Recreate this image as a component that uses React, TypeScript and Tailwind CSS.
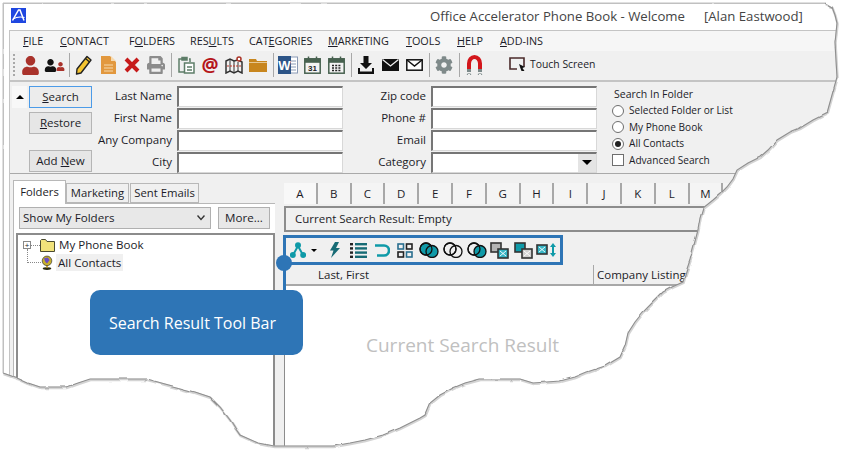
import { FaCog, FaPrint, FaUser } from 'react-icons/fa';

// Torn part of the paper outline, from the top right round to the bottom left
const TORN_EDGE =
  'M825 3 L832 7 L835 15 L837 23 L835 43 L836 60 L837 77 L832 95 L827 113 L813 120 L800 128 L790 132 L777 140 L768 150 L760 157 L748 163 L737 170 L733 179 L727 187 L720 194 L713 200 L703 208 L700 218 L698 230 L694 245 L690 260 L686 272 L683 282 L672 287 L663 292 L652 303 L643 312 L635 322 L628 333 L625 346 L620 357 L605 366 L587 372 L575 377 L560 381 L533 383 L520 379 L480 379 L465 383 L453 388 L440 395 L430 403 L425 415 L420 418 L400 428 L383 435 L365 440 L350 443 L333 446 L273 446 L258 443 L240 435 L235 428 L230 420 L220 407 L210 397 L195 392 L180 388 L165 384 L147 379 L90 379 L78 383 L67 387 L40 387 L28 383 L17 378 L3 373';

const TORN = 'M3 3 L' + TORN_EDGE.slice(1) + ' Z';

const MENU = [
  { key: 'F', rest: 'ILE', w: 'w-[37px]' },
  { key: 'C', rest: 'ONTACT', w: 'w-[69px]' },
  { pre: 'F', key: 'O', rest: 'LDERS', w: 'w-[61px]' },
  { pre: 'RES', key: 'U', rest: 'LTS', w: 'w-[59px]' },
  { pre: 'CAT', key: 'E', rest: 'GORIES', w: 'w-[79px]' },
  { key: 'M', rest: 'ARKETING', w: 'w-[78px]' },
  { key: 'T', rest: 'OOLS', w: 'w-[51px]' },
  { key: 'H', rest: 'ELP', w: 'w-[43px]' },
  { key: 'A', rest: 'DD-INS', w: 'w-[70px]' },
];

const LETTERS = ['A', 'B', 'C', 'D', 'E', 'F', 'G', 'H', 'I', 'J', 'K', 'L', 'M', 'N'];

function Slot({ children }: { children: React.ReactNode }) {
  return <div className="flex h-[24px] w-[24px] items-center justify-center">{children}</div>;
}

function Sep() {
  return (
    <div className="flex h-[24px] w-[6px] justify-center">
      <div className="h-full w-px bg-[#a8a8a8]" />
    </div>
  );
}

function Logo() {
  return (
    <svg width="15" height="15" viewBox="0 0 15 15" className="ml-[7px] mt-[-3px] shrink-0">
      <rect width="15" height="15" fill="#1f47e0" />
      <path d="M1.5 12.5 L7.5 2 L9 2 L13 12.5" fill="none" stroke="#fff" strokeWidth="1.5" />
      <path d="M2 11 C6 8.5 9 8.5 13.5 9.5" fill="none" stroke="#fff" strokeWidth="1.2" />
    </svg>
  );
}

function Pencil() {
  return (
    <svg width="18" height="20" viewBox="0 0 18 20">
      <path d="M12 1.5 L16 5 L6 18 L1.5 19 L2 14 Z" fill="#f4c430" stroke="#222" strokeWidth="1.4" strokeLinejoin="round" />
      <path d="M10.5 3.5 L14.5 7" stroke="#222" strokeWidth="1.2" />
    </svg>
  );
}

function Doc() {
  return (
    <svg width="15" height="18" viewBox="0 0 15 18">
      <path d="M0 0 H9 L15 6 V18 H0 Z" fill="#e2983e" />
      <path d="M10 0 L15 5 H10 Z" fill="#f6d9ae" />
      <path d="M3 9 H12 M3 12 H12 M3 15 H12" stroke="#f6d9ae" strokeWidth="1.2" />
    </svg>
  );
}

function RedX() {
  return (
    <svg width="16" height="16" viewBox="0 0 16 16">
      <path d="M2 2 L14 14 M14 2 L2 14" stroke="#c61a1a" strokeWidth="4" />
    </svg>
  );
}

function Clip() {
  return (
    <svg width="17" height="18" viewBox="0 0 17 18" fill="none" stroke="#5e7d68" strokeWidth="1.5">
      <path d="M5 3 H1 V16 H6" />
      <path d="M4 1.5 H9 V4 H4 Z" fill="#5e7d68" />
      <path d="M11 3 H12 V6" />
      <rect x="6.5" y="7" width="9.5" height="10" fill="#fff" />
      <path d="M9 11 H14 M9 14 H14" />
    </svg>
  );
}

function MapIcon() {
  return (
    <svg width="18" height="18" viewBox="0 0 18 18" fill="none" stroke="#333" strokeWidth="1.5">
      <path d="M1 5 L5 3 L9 5 L13 4 L17 6 V17 L13 15 L9 17 L5 15 L1 17 Z" fill="#f2f2f2" />
      <path d="M5 3 V15 M9 5 V17 M13 6 V15" strokeWidth="1" />
      <path d="M2 10 H16" stroke="#c0392b" strokeWidth="1" strokeDasharray="2 1" />
      <circle cx="14" cy="3" r="2" fill="#fff" stroke="#a93226" />
    </svg>
  );
}

function FolderIcon() {
  return (
    <svg width="18" height="13" viewBox="0 0 18 13">
      <path d="M0 0 H7 L8 2 H18 V13 H0 Z" fill="#c8861e" />
      <path d="M0 3.5 H18" stroke="#ecd9b2" strokeWidth="0.8" />
    </svg>
  );
}

function Word() {
  return (
    <svg width="20" height="18" viewBox="0 0 20 18">
      <rect x="9" y="1" width="10.5" height="16" fill="#fff" stroke="#8a9ab5" />
      <path d="M12 5 H18 M12 8 H18 M12 11 H18 M12 14 H18" stroke="#8a9ab5" />
      <rect x="0" y="0" width="13" height="18" fill="#2c5487" />
      <text x="6.5" y="14" textAnchor="middle" fontSize="13" fontWeight="700" fill="#fff" fontFamily="Liberation Sans, sans-serif">W</text>
    </svg>
  );
}

function Cal({ grid }: { grid?: boolean }) {
  return (
    <svg width="17" height="18" viewBox="0 0 17 18">
      <rect x="0.8" y="2.8" width="15.4" height="14.4" fill="#f3f3f3" stroke="#47614f" strokeWidth="1.5" />
      <rect x="0.8" y="2.8" width="15.4" height="4" fill="#47614f" />
      <path d="M4.5 0.5 V4 M12.5 0.5 V4" stroke="#47614f" strokeWidth="1.5" />
      {grid ? (
        <path d="M4 9.5 H13 M4 12 H13 M4 14.5 H13" stroke="#222" strokeWidth="1.5" strokeDasharray="2 1.2" />
      ) : (
        <text x="8.5" y="15" textAnchor="middle" fontSize="8" fontWeight="700" fill="#222" fontFamily="Liberation Sans, sans-serif">31</text>
      )}
    </svg>
  );
}

function Download() {
  return (
    <svg width="16" height="18" viewBox="0 0 16 18" fill="#111">
      <path d="M5.5 0 H10.5 V7 H14 L8 13 L2 7 H5.5 Z" />
      <path d="M0 12 H2 V15.5 H14 V12 H16 V18 H0 Z" />
    </svg>
  );
}

function Mail({ solid }: { solid?: boolean }) {
  return solid ? (
    <svg width="17" height="12" viewBox="0 0 17 12">
      <rect width="17" height="12" fill="#111" />
      <path d="M0.5 0.5 L8.5 7 L16.5 0.5" fill="none" stroke="#f0f0f0" strokeWidth="1.3" />
    </svg>
  ) : (
    <svg width="17" height="12" viewBox="0 0 17 12" fill="none" stroke="#111" strokeWidth="1.5">
      <rect x="0.8" y="0.8" width="15.4" height="10.4" fill="#fff" />
      <path d="M1 1 L8.5 7 L16 1" />
    </svg>
  );
}

function Magnet() {
  return (
    <svg width="17" height="21" viewBox="0 0 17 21" fill="none">
      <path d="M3 14 V8.5 A5.5 6.5 0 0 1 14 8.5 V14" stroke="#d3161b" strokeWidth="4" />
      <path d="M3 14 V17 M14 14 V17" stroke="#7c8a8a" strokeWidth="4" />
      <path d="M1 20 L2.5 18 M5 20 L3.5 18 M12 20 L13.5 18 M16 20 L14.5 18" stroke="#7c8a8a" strokeWidth="1" />
    </svg>
  );
}

function Touch() {
  return (
    <svg width="18" height="15" viewBox="0 0 18 15" fill="none">
      <path d="M15 10 V1 H1 V12 H8" stroke="#4a2a2a" strokeWidth="1.6" />
      <path d="M10 7 L16 10 L13.5 11 L15.5 14 L12.5 14 L11.5 11.5 Z" fill="#111" />
    </svg>
  );
}

function Btn({ pre, k, rest, cls }: { pre?: string; k: string; rest?: string; cls: string }) {
  return (
    <div className={'flex h-[22px] w-[63px] items-center justify-center whitespace-pre border text-[11.5px] ' + cls}>
      {pre && <span>{pre}</span>}
      <span className="underline">{k}</span>
      <span>{rest}</span>
    </div>
  );
}

function Field({ label, labelW, select }: { label: string; labelW: string; select?: boolean }) {
  return (
    <div className="flex h-[22px] items-center">
      <div className={'pr-[5px] text-right text-[11.5px] ' + labelW}>{label}</div>
      <div className="relative h-[21px] w-[166px] border-t-2 border-l-2 border-t-[#767676] border-l-[#767676] border-b border-r border-b-[#d8d8d8] border-r-[#d8d8d8] bg-white">
        {select && (
          <div className="absolute right-0 top-0 flex h-full w-[18px] items-center justify-center bg-[#e4e4e4]">
            <div className="h-0 w-0 border-x-[5px] border-t-[5px] border-x-transparent border-t-black" />
          </div>
        )}
      </div>
    </div>
  );
}

function Radio({ label, on }: { label: string; on?: boolean }) {
  return (
    <div className="flex h-[16.5px] items-center gap-[5px] whitespace-nowrap text-[10.1px]">
      <div className="flex h-[12px] w-[12px] items-center justify-center rounded-full border border-[#6e6e6e] bg-white">
        {on && <div className="h-[6px] w-[6px] rounded-full bg-[#222]" />}
      </div>
      {label}
    </div>
  );
}

// Search result tool bar drawings
const TEAL = '#0f9aa8';

function Branch() {
  return (
    <svg width="16" height="16" viewBox="0 0 16 16" fill="none" stroke={TEAL} strokeWidth="2">
      <path d="M3 13 L8 4 L13 13" />
      <circle cx="8" cy="3.2" r="2" fill={TEAL} />
      <circle cx="2.8" cy="13" r="2" fill={TEAL} />
      <circle cx="13.2" cy="13" r="2" fill={TEAL} />
    </svg>
  );
}

function Bolt() {
  return (
    <svg width="11" height="16" viewBox="0 0 11 16" fill="#176b75">
      <path d="M6 0 H10 L7 6 H11 L2 16 L4.5 8.5 H1 Z" />
    </svg>
  );
}

function ListIcon() {
  return (
    <svg width="17" height="15" viewBox="0 0 17 15" fill="#176b75">
      <rect x="0" y="0" width="3" height="2.4" fill="#222" />
      <rect x="0" y="4.2" width="3" height="2.4" fill="#222" />
      <rect x="0" y="8.4" width="3" height="2.4" fill="#222" />
      <rect x="0" y="12.6" width="3" height="2.4" fill="#222" />
      <rect x="5" y="0" width="12" height="2.4" />
      <rect x="5" y="4.2" width="12" height="2.4" />
      <rect x="5" y="8.4" width="12" height="2.4" />
      <rect x="5" y="12.6" width="12" height="2.4" />
    </svg>
  );
}

function Undo() {
  return (
    <svg width="16" height="15" viewBox="0 0 16 15" fill="none" stroke={TEAL} strokeWidth="2.6">
      <path d="M1 2.5 H10 A5 5 0 0 1 10 12.5 H3" />
    </svg>
  );
}

function Grid4() {
  return (
    <svg width="16" height="15" viewBox="0 0 16 15" fill="none" strokeWidth="1.6">
      <rect x="1" y="1" width="5.5" height="5" stroke="#2a6f8f" />
      <rect x="9.5" y="1" width="5.5" height="5" stroke="#222" />
      <rect x="1" y="9" width="5.5" height="5" stroke="#222" />
      <rect x="9.5" y="9" width="5.5" height="5" stroke="#2a6f8f" />
    </svg>
  );
}

function Circles({ left, right }: { left?: boolean; right?: boolean }) {
  return (
    <svg width="20" height="16" viewBox="0 0 20 16" stroke="#111" strokeWidth="1.3">
      <circle cx="7" cy="7" r="6" fill={left ? TEAL : 'none'} />
      <circle cx="13" cy="9.5" r="6" fill={right ? TEAL : 'none'} />
      <circle cx="7" cy="7" r="6" fill="none" />
    </svg>
  );
}

function Squares({ front }: { front: 'a' | 'b' }) {
  const a = front === 'a' ? TEAL : '#b4b4b4';
  const b = front === 'a' ? '#d0d0d0' : '#36b4c4';
  return (
    <svg width="19" height="17" viewBox="0 0 19 17" stroke="#333" strokeWidth="1.6">
      <rect x="1" y="1" width="10" height="9" fill={a} />
      <rect x="8" y="7" width="10" height="9" fill={b} />
      <path d="M10 9 L16 14 M16 9 L10 14" stroke="#fff" strokeWidth="0.9" />
    </svg>
  );
}

function SizeIcon() {
  return (
    <svg width="21" height="16" viewBox="0 0 21 16">
      <rect x="1" y="3" width="10" height="9" fill="#36b4c4" stroke="#333" strokeWidth="1.6" />
      <path d="M3 5 L9 10 M9 5 L3 10" stroke="#fff" strokeWidth="0.9" />
      <path d="M14 5 L17 1 L20 5 H18 V11 H20 L17 15 L14 11 H16 V5 Z" fill={TEAL} />
    </svg>
  );
}

function Globe() {
  return (
    <svg width="12" height="16" viewBox="0 0 14 17" className="shrink-0">
      <ellipse cx="7" cy="15" rx="5" ry="1.6" fill="#2a2a10" />
      <rect x="6" y="11" width="2" height="3" fill="#c9a227" />
      <circle cx="7" cy="6" r="5.6" fill="#c7b02c" stroke="#333" strokeWidth="0.8" />
      <path d="M3.5 3 L8 2 L10 5 L7 9 L5 7 Z" fill="#6a4bc4" />
    </svg>
  );
}

function TreeFolder() {
  return (
    <svg width="15" height="13" viewBox="0 0 15 13" className="shrink-0">
      <path d="M0.5 12.5 V1.5 L1.5 0.5 H5.5 L7 2.5 H14.5 V12.5 Z" fill="#f1e27a" stroke="#4a4a30" />
    </svg>
  );
}

export default function App() {
  return (
    <div className="relative h-[453px] w-[844px] overflow-hidden bg-white font-['Open_Sans',sans-serif] text-[#1c1c28]">
      {/* Window */}
      <div className="ml-[3px] mt-[3px] flex h-[444px] w-[838px] flex-col border-l border-t border-[#c0c0c0]">
        {/* Title bar */}
        <div className="flex h-[26px] shrink-0 items-center">
          <Logo />
          <div className="ml-[404px] whitespace-nowrap text-[13.2px] text-[#444]">Office Accelerator Phone Book - Welcome</div>
          <div className="ml-[19px] whitespace-nowrap text-[13.2px] text-[#444]">[Alan Eastwood]</div>
        </div>

        <div className="ml-[5px] flex flex-1 flex-col border-l border-t border-[#c4c4c4] bg-[#f0f0f0]">
          {/* Menu */}
          <div className="flex h-[20px] shrink-0 items-center bg-[#f6f6f6] pl-[13px] text-[10.8px]">
            {MENU.map(m => (
              <div key={m.key + m.rest} className={'whitespace-nowrap ' + m.w}>
                {m.pre}
                <span className="underline">{m.key}</span>
                {m.rest}
              </div>
            ))}
          </div>

          {/* Main tool bar */}
          <div className="flex h-[31px] shrink-0 items-center border-b-2 border-[#c4c4c4] pb-px pl-[3px]">
            <div className="mr-[3px] h-[22px] w-[2px] border-l-2 border-dotted border-[#a8a8a8]" />
            <Slot><FaUser className="text-[19px] text-[#a9322b]" /></Slot>
            <Slot>
              <FaUser className="text-[13px] text-[#111]" />
              <FaUser className="ml-[-1px] mt-[2px] text-[9px] text-[#a9322b]" />
            </Slot>
            <Sep />
            <Slot><Pencil /></Slot>
            <Slot><Doc /></Slot>
            <Slot><RedX /></Slot>
            <Slot><FaPrint className="text-[18px] text-[#8c8c8c]" /></Slot>
            <Sep />
            <Slot><Clip /></Slot>
            <Slot><span className="text-[19px] font-bold leading-none text-[#b5161b]">@</span></Slot>
            <Slot><MapIcon /></Slot>
            <Slot><FolderIcon /></Slot>
            <Sep />
            <Slot><Word /></Slot>
            <Slot><Cal /></Slot>
            <Slot><Cal grid /></Slot>
            <Sep />
            <Slot><Download /></Slot>
            <Slot><Mail solid /></Slot>
            <Slot><Mail /></Slot>
            <Sep />
            <Slot><FaCog className="text-[18px] text-[#7f8a8a]" /></Slot>
            <Sep />
            <Slot><Magnet /></Slot>
            <div className="ml-[23px] flex items-center gap-[3px] whitespace-nowrap text-[10.4px]">
              <Touch />
              Touch Screen
            </div>
          </div>

          {/* Search panel */}
          <div className="flex h-[92px] shrink-0 border-b border-[#a9a9a9] pl-[2px] pt-[3px]">
            <div className="mt-px flex h-[22px] w-[15px] items-center justify-center bg-[#f8f8f8]">
              <div className="h-0 w-0 border-x-[4px] border-b-[4px] border-x-transparent border-b-black" />
            </div>
            <div className="ml-[2px] mt-px flex w-[63px] flex-col">
              <Btn k="S" rest="earch" cls="border-[#4c9be8] bg-[#ececec]" />
              <Btn k="R" rest="estore" cls="mt-[4px] border-[#b5b5b5] bg-[#e6e6e6]" />
              <Btn pre="Add " k="N" rest="ew" cls="mt-[16px] border-[#b5b5b5] bg-[#e6e6e6]" />
            </div>
            <div className="flex flex-col">
              <Field label="Last Name" labelW="w-[85px]" />
              <Field label="First Name" labelW="w-[85px]" />
              <Field label="Any Company" labelW="w-[85px]" />
              <Field label="City" labelW="w-[85px]" />
            </div>
            <div className="flex flex-col">
              <Field label="Zip code" labelW="w-[88px]" />
              <Field label="Phone #" labelW="w-[88px]" />
              <Field label="Email" labelW="w-[88px]" />
              <Field label="Category" labelW="w-[88px]" select />
            </div>
            <div className="ml-[15px] flex flex-col pt-[2px]">
              <div className="ml-[2px] h-[15.5px] whitespace-nowrap text-[10.5px] leading-[15px]">Search In Folder</div>
              <Radio label="Selected Folder or List" />
              <Radio label="My Phone Book" />
              <Radio label="All Contacts" on />
              <div className="flex h-[16.5px] items-center gap-[5px] whitespace-nowrap text-[10.1px]">
                <div className="h-[12px] w-[12px] border border-[#6e6e6e] bg-white" />
                Advanced Search
              </div>
            </div>
          </div>

          {/* Lower area */}
          <div className="flex flex-1 pl-[3px]">
            {/* Folder pane */}
            <div className="flex w-[262px] shrink-0 flex-col pt-[6px]">
              <div className="flex h-[23px] items-end text-[11.3px]">
                <div className="relative z-10 -mb-px flex h-[24px] w-[53px] items-center justify-center border border-b-0 border-[#b8b8b8] bg-white">Folders</div>
                <div className="flex h-[20px] w-[63px] items-center justify-center border border-[#b8b8b8] bg-[#f0f0f0]">Marketing</div>
                <div className="ml-px flex h-[20px] w-[69px] items-center justify-center border border-[#b8b8b8] bg-[#f0f0f0]">Sent Emails</div>
              </div>
              <div className="flex flex-1 flex-col border-l border-t border-[#b8b8b8] bg-white pt-[3px]">
                <div className="flex gap-[7px] pl-[5px]">
                  <div className="flex h-[22px] w-[192px] items-center justify-between border border-[#b0b0b0] bg-[#e8e8e8] px-[3px] text-[11.6px]">
                    Show My Folders
                    <svg width="8" height="6" viewBox="0 0 8 6" fill="none" stroke="#333" strokeWidth="1.4" className="mr-[2px]">
                      <path d="M0.5 0.5 L4 4.5 L7.5 0.5" />
                    </svg>
                  </div>
                  <div className="flex h-[22px] w-[52px] items-center justify-center border border-[#b0b0b0] bg-[#e8e8e8] text-[11.6px]">More...</div>
                </div>
                <div className="relative ml-[2px] mt-[4px] flex-1 border-l-2 border-t-2 border-r-2 border-[#8c8c8c] bg-white text-[11.6px]">
                  {/* Tree */}
                  <div className="absolute left-[9px] top-[14px] h-[14px] w-0 border-l border-dotted border-[#888]" />
                  <div className="flex h-[18px] items-center pl-[5px] pt-[2px]">
                    <div className="flex h-[8px] w-[8px] shrink-0 items-center justify-center border border-[#888] text-[8px] leading-none">+</div>
                    <div className="h-0 w-[9px] border-t border-dotted border-[#888]" />
                    <TreeFolder />
                    <span className="ml-[4px]">My Phone Book</span>
                  </div>
                  <div className="flex h-[18px] items-center pl-[9px] pt-[1px]">
                    <div className="h-0 w-[14px] border-t border-dotted border-[#888]" />
                    <Globe />
                    <span className="ml-[3px] bg-[#f0f0f0] px-[2px] py-px leading-[15px]">All Contacts</span>
                  </div>
                </div>
              </div>
            </div>

            {/* Result pane */}
            <div className="ml-[9px] flex flex-1 flex-col pt-[9px]">
              <div className="flex h-[23px] shrink-0 items-start text-[11.5px]">
                {LETTERS.map((l, i) => (
                  <div
                    key={l}
                    className={
                      'flex h-[21px] w-[33.8px] shrink-0 items-center justify-center border-r-2 border-[#a8a8a8] ' +
                      (i === 0 ? 'bg-[#f8f8f8]' : 'bg-[#f4f4f4]')
                    }
                  >
                    {l}
                  </div>
                ))}
              </div>
              <div className="flex h-[26px] shrink-0 items-center border-2 border-[#8c8c8c] pl-[9px] text-[11.5px]">
                Current Search Result: Empty
              </div>
              {/* Search result tool bar */}
              <div className="ml-[-1px] mt-[3px] flex h-[30px] w-[280px] shrink-0 items-center border-[3px] border-[#2e75b6] pl-[3px]">
                <div className="flex w-[18px] justify-center"><Branch /></div>
                <div className="ml-[4px] h-0 w-0 border-x-[3px] border-t-[3px] border-x-transparent border-t-black" />
                <div className="ml-[8px] flex w-[18px] justify-center"><Bolt /></div>
                <div className="ml-[5px] flex w-[20px] justify-center"><ListIcon /></div>
                <div className="ml-[4px] flex w-[20px] justify-center"><Undo /></div>
                <div className="ml-[3px] flex w-[20px] justify-center"><Grid4 /></div>
                <div className="ml-[3px] flex w-[21px] justify-center"><Circles left right /></div>
                <div className="ml-[3px] flex w-[21px] justify-center"><Circles /></div>
                <div className="ml-[3px] flex w-[21px] justify-center"><Circles right /></div>
                <div className="ml-[2px] flex w-[20px] justify-center"><Squares front="b" /></div>
                <div className="ml-[4px] flex w-[20px] justify-center"><Squares front="a" /></div>
                <div className="ml-[2px] flex w-[22px] justify-center"><SizeIcon /></div>
              </div>
              {/* List header */}
              <div className="flex h-[21px] shrink-0 items-center border-b-2 border-[#a8a8a8] text-[11.5px]">
                <div className="h-full w-[310px] border-r border-[#a8a8a8] pl-[34px] leading-[20px]">Last, First</div>
                <div className="whitespace-nowrap pl-[3px]">Company Listing</div>
              </div>
              {/* Empty list */}
              <div className="relative flex-1 border-l border-[#8c8c8c] bg-white">
                <div className="ml-[81px] mt-[45px] whitespace-nowrap text-[19px] text-[#c0c0c0]">Current Search Result</div>
              </div>
            </div>
          </div>
        </div>
      </div>

      {/* Torn paper edge laid over the window */}
      <svg className="absolute left-0 top-0" width="844" height="453" viewBox="0 0 844 453">
        <defs>
          <filter id="rough" filterUnits="userSpaceOnUse" x="0" y="0" width="844" height="453">
            <feTurbulence type="fractalNoise" baseFrequency="0.06" numOctaves="2" seed="4" />
            <feDisplacementMap in="SourceGraphic" scale="3" xChannelSelector="R" yChannelSelector="G" />
          </filter>
        </defs>
        <g filter="url(#rough)">
          <path d={'M-20 -20 H864 V473 H-20 Z ' + TORN} fill="#fff" fillRule="evenodd" />
          <path d={TORN_EDGE} fill="none" stroke="#d4d4d4" strokeWidth="2.4" transform="translate(0.6 1)" />
          <path d={TORN_EDGE} fill="none" stroke="#8f8f8f" strokeWidth="1.1" />
        </g>
        <path d="M3 373 V3 H825" fill="none" stroke="#c0c0c0" strokeWidth="1" />
      </svg>

      {/* Callout */}
      <div className="absolute left-[276px] top-[255px] h-[16px] w-[16px] rounded-full bg-[#2e75b6]" />
      <div className="absolute left-[283px] top-[268px] h-[24px] w-[3px] bg-[#2e75b6]" />
      <div className="absolute left-[90px] top-[290px] flex h-[65px] w-[213px] items-center justify-center rounded-[10px] bg-[#2e75b6] pr-[8px] text-[16px] text-white">
        Search Result Tool Bar
      </div>
    </div>
  );
}
